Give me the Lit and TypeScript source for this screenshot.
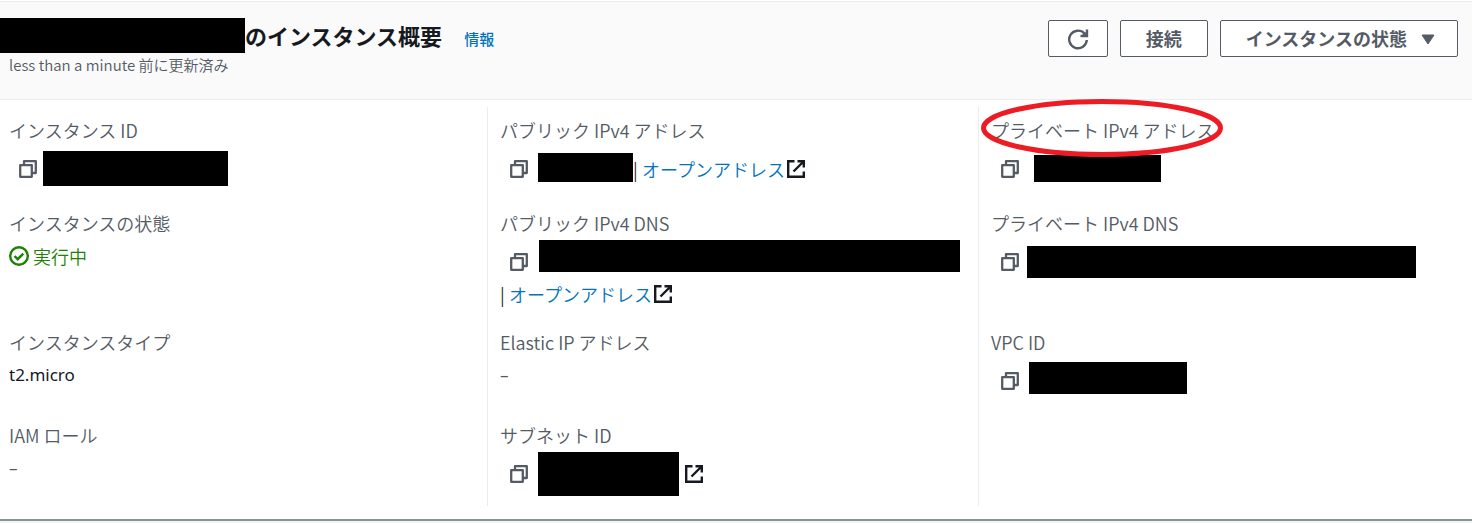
import { LitElement, html, css, svg, nothing } from "lit";
import { customElement } from "lit/decorators.js";
import { styleMap } from "lit/directives/style-map.js";

interface Mask {
  width: number;
  height: number;
  indent: number;
  lift?: number;
}

interface Field {
  label: string;
  text?: string;
  muted?: boolean;
  status?: string;
  mask?: Mask;
  open?: "inline" | "below" | "icon";
  circled?: boolean;
}

const columns: Field[][] = [
  [
    { label: "インスタンス ID", mask: { width: 185, height: 35, indent: 6, lift: 2 } },
    { label: "インスタンスの状態", status: "実行中" },
    { label: "インスタンスタイプ", text: "t2.micro" },
    { label: "IAM ロール", text: "–", muted: true },
  ],
  [
    { label: "パブリック IPv4 アドレス", mask: { width: 95, height: 29, indent: 10, lift: 4 }, open: "inline" },
    { label: "パブリック IPv4 DNS", mask: { width: 421, height: 32, indent: 11, lift: 12 }, open: "below" },
    { label: "Elastic IP アドレス", text: "–", muted: true },
    { label: "サブネット ID", mask: { width: 141, height: 44, indent: 10 }, open: "icon" },
  ],
  [
    { label: "プライベート IPv4 アドレス", mask: { width: 127, height: 27, indent: 15, lift: 2 }, circled: true },
    { label: "プライベート IPv4 DNS", mask: { width: 389, height: 32, indent: 8 } },
    { label: "VPC ID", mask: { width: 158, height: 32, indent: 10, lift: 6 } },
  ],
];

const copyIcon = svg`<svg class="icon" viewBox="0 0 18 18" aria-hidden="true">
  <path d="M5 4.500V1.200h11.800v11.800h-3.300M1.200 5.200h11.600v11.600H1.200z" fill="none" stroke="currentColor" stroke-width="2.300" stroke-linejoin="round"/>
</svg>`;

const externalIcon = svg`<svg class="icon external" viewBox="0 0 18 18" aria-hidden="true">
  <path d="M7.500 1.200H1.200v15.600h15.600V11.500M10.500 1.200h6.300V7.500M16.500 1.500L6.500 11.500" fill="none" stroke="currentColor" stroke-width="2.400"/>
</svg>`;

@customElement("app-root")
export class AppRoot extends LitElement {
  static styles = css`
    :host {
      display: block;
      min-height: 100vh;
      box-sizing: border-box;
      background: #f2f3f3;
      color: #16191f;
      font-family: "Noto Sans CJK JP", "Noto Sans", sans-serif;
      font-size: 18px;
      line-height: 26px;
    }
    .panel {
      background: #fff;
      border-top: 1px solid #eaeded;
      border-bottom: 2px solid #879596;
      margin-top: 1px;
    }
    .head {
      display: flex;
      justify-content: space-between;
      align-items: flex-start;
      background: #fafafa;
      border-bottom: 1px solid #eaeded;
      padding: 16px 14px 22px 0;
    }
    .title {
      display: flex;
      align-items: center;
    }
    h1 {
      margin: 0 22px 0 0;
      font-size: 22px;
      line-height: 35px;
      font-weight: 700;
    }
    .info {
      font-size: 15px;
      font-weight: 500;
      padding-top: 6px;
    }
    .updated {
      margin: 0;
      padding-left: 9px;
      font-size: 15px;
      line-height: 24px;
      font-weight: 350;
      color: #545b64;
    }
    a {
      color: #0073bb;
      text-decoration: none;
    }
    .actions {
      display: flex;
      gap: 12px;
      padding-top: 2px;
    }
    .btn {
      display: flex;
      align-items: center;
      gap: 14px;
      height: 37px;
      box-sizing: border-box;
      padding: 0 25px 2px;
      border: 1px solid #545b64;
      border-radius: 2px;
      background: #fff;
      color: #545b64;
      font: inherit;
      font-weight: 700;
    }
    .btn.square {
      padding: 0 18px;
    }
    .btn.menu {
      padding-right: 22px;
    }
    .refresh {
      width: 22px;
      height: 22px;
    }
    .caret {
      width: 14px;
      height: 14px;
    }
    .fields {
      display: grid;
      grid-template-columns: repeat(3, minmax(0, 1fr));
      grid-template-rows: repeat(4, auto);
      row-gap: 23px;
      margin: 0 2px 0 -3px;
      padding: 7px 0 13px;
    }
    .column {
      display: grid;
      grid-row: span 4;
      grid-template-rows: subgrid;
      margin: 0;
      padding: 11px 0 13px 12px;
      border-right: 1px solid #eaeded;
      font-weight: 350;
    }
    .column:last-child {
      border-right: 0;
    }
    dt {
      color: #545b64;
      line-height: 24px;
      margin-bottom: 8px;
    }
    dd {
      margin: 0;
    }
    .plain {
      font-family: "Noto Sans", sans-serif;
      font-size: 17px;
      font-weight: 400;
    }
    .muted {
      color: #545b64;
    }
    .status {
      display: flex;
      align-items: center;
      gap: 4px;
      color: #1d8102;
    }
    .status svg {
      width: 20px;
      height: 20px;
    }
    .line {
      display: flex;
      align-items: center;
    }
    .masked {
      height: 38px;
      padding-left: 10px;
    }
    .copy {
      display: flex;
      padding: 0;
      border: 0;
      background: none;
      color: #545b64;
    }
    .icon {
      display: block;
      width: 18px;
      height: 18px;
      flex: none;
    }
    .external {
      color: #16191f;
    }
    .mask {
      background: #000;
      flex: none;
    }
    .title .mask {
      width: 245px;
      height: 35px;
    }
    .open {
      display: flex;
      align-items: center;
      gap: 2px;
    }
    .sep {
      width: 9px;
    }
    .masked .icon-only {
      margin-left: 6px;
    }
    .circled {
      position: relative;
    }
    .ring {
      position: absolute;
      left: -10px;
      top: -18px;
      width: 242px;
      height: 58px;
      z-index: 1;
      pointer-events: none;
    }
  `;

  private renderLink() {
    return html`<span class="sep">|</span><a class="open" href="#">オープンアドレス${externalIcon}</a>`;
  }

  private renderValue(f: Field) {
    if (f.status) {
      return html`<dd class="status">
        <svg viewBox="0 0 20 20" aria-hidden="true">
          <circle cx="10" cy="10" r="8.800" fill="none" stroke="currentColor" stroke-width="2.400" />
          <path d="M5.500 10l3.200 3.200L14.300 7.600" fill="none" stroke="currentColor" stroke-width="2.400" />
        </svg>
        <span>${f.status}</span>
      </dd>`;
    }
    if (!f.mask) {
      return html`<dd class=${f.muted ? "plain muted" : "plain"}>${f.text}</dd>`;
    }
    const m = f.mask;
    return html`<dd>
      <div class="line masked">
        <button class="copy" aria-label="コピー">${copyIcon}</button>
        <span
          class="mask"
          style=${styleMap({
            width: `${m.width}px`,
            height: `${m.height}px`,
            marginLeft: `${m.indent}px`,
            marginBottom: `${m.lift ?? 0}px`,
          })}
        ></span>
        ${f.open === "inline" ? this.renderLink() : nothing}
        ${f.open === "icon" ? html`<a class="icon-only" href="#" aria-label=${f.label}>${externalIcon}</a>` : nothing}
      </div>
      ${f.open === "below" ? html`<div class="line">${this.renderLink()}</div>` : nothing}
    </dd>`;
  }

  private renderField(f: Field) {
    return html`<div>
      <dt>
        ${f.circled
          ? html`<span class="circled"
              >${f.label}<svg class="ring" viewBox="0 0 242 58" aria-hidden="true">
                <ellipse cx="121" cy="29" rx="118.500" ry="26.500" fill="none" stroke="#ed1c24" stroke-width="5" />
              </svg></span
            >`
          : f.label}
      </dt>
      ${this.renderValue(f)}
    </div>`;
  }

  render() {
    return html`<section class="panel">
      <header class="head">
        <div>
          <div class="title">
            <span class="mask"></span>
            <h1>のインスタンス概要</h1>
            <a class="info" href="#">情報</a>
          </div>
          <p class="updated">less than a minute 前に更新済み</p>
        </div>
        <div class="actions">
          <button class="btn square" aria-label="更新">
            <svg class="refresh" viewBox="0 0 22 22" aria-hidden="true">
              <path d="M19.800 12A8.800 8.800 0 1 1 17.500 5.500" fill="none" stroke="currentColor" stroke-width="2.400" />
              <path d="M20 1.500v6.500h-6.500" fill="none" stroke="currentColor" stroke-width="2.400" />
              <path d="M15 7l4-3v3z" fill="currentColor" />
            </svg>
          </button>
          <button class="btn">接続</button>
          <button class="btn menu">
            インスタンスの状態
            <svg class="caret" viewBox="0 0 14 14" aria-hidden="true">
              <path d="M1 4h12L7 13z" fill="currentColor" stroke="currentColor" stroke-linejoin="round" />
            </svg>
          </button>
        </div>
      </header>
      <div class="fields">
        ${columns.map((c) => html`<dl class="column">${c.map((f) => this.renderField(f))}</dl>`)}
      </div>
    </section>`;
  }
}
